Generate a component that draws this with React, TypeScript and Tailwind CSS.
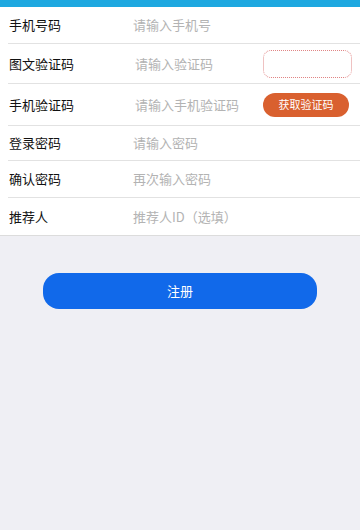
import React from 'react';

type Row = {
  label: string;
  placeholder: string;
  h: string;
  gap: string;
  extra?: 'captcha' | 'sms';
};

const rows: Row[] = [
  { label: '手机号码', placeholder: '请输入手机号', h: 'h-[37px]', gap: 'pl-[9px]' },
  { label: '图文验证码', placeholder: '请输入验证码', h: 'h-[40px]', gap: 'pl-[11px]', extra: 'captcha' },
  { label: '手机验证码', placeholder: '请输入手机验证码', h: 'h-[42px]', gap: 'pl-[11px]', extra: 'sms' },
  { label: '登录密码', placeholder: '请输入密码', h: 'h-[35px]', gap: 'pl-[9px]' },
  { label: '确认密码', placeholder: '再次输入密码', h: 'h-[37px]', gap: 'pl-[9px]' },
  { label: '推荐人', placeholder: '推荐人ID（选填）', h: 'h-[37px]', gap: 'pl-[9px]' },
];

export default function App() {
  return (
    <div
      className="min-h-[530px] bg-[#efeff4]"
      style={{ fontFamily: '"Noto Sans CJK SC", "Noto Sans", sans-serif' }}
    >
      <div className="h-[7px] bg-[#1ea8e0]" />

      {/* form rows */}
      <div className="bg-white border-b border-[#dcdcdc] pl-[8px]">
        {rows.map((r, i) => (
          <div
            key={r.label}
            className={`${r.h} flex items-center pl-[1px] ${
              i < rows.length - 1 ? 'border-b border-[#e2e2e2]' : ''
            }`}
          >
            <span className="w-[115px] shrink-0 text-[13px] text-[#111]">{r.label}</span>
            <span className={`flex-1 text-[13px] text-[#b3b3b3] ${r.gap}`}>{r.placeholder}</span>
            {r.extra === 'captcha' && (
              <div className="w-[89px] h-[28px] mr-[8px] rounded-[8px] border-[1.5px] border-dotted border-[#e08585]" />
            )}
            {r.extra === 'sms' && (
              <button className="w-[86px] h-[24px] mr-[11px] rounded-full bg-[#d9602f] text-white text-[11px] leading-none">
                获取验证码
              </button>
            )}
          </div>
        ))}
      </div>

      <div className="pt-[37px] flex justify-center">
        <button className="w-[274px] h-[36px] rounded-[16px] bg-[#1169ea] text-white text-[13px]">
          注册
        </button>
      </div>
    </div>
  );
}
